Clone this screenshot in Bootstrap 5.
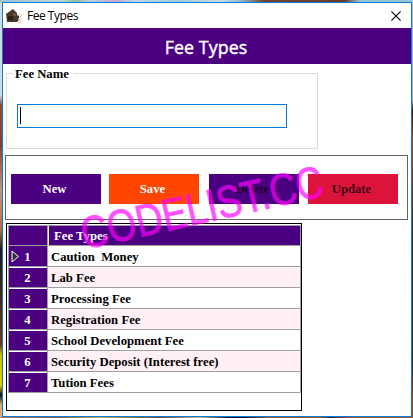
<!DOCTYPE html>
<html lang="en">
<head>
<meta charset="utf-8">
<meta name="viewport" content="width=device-width, initial-scale=1">
<title>Fee Types</title>
<link rel="stylesheet" href="https://cdn.jsdelivr.net/npm/bootstrap@5.3.0/dist/css/bootstrap.min.css">
<style>
html,body{height:100%;overflow:hidden}
.desktop{width:413px;height:418px;padding:2px 1px 1px 2px;
background:
linear-gradient(90deg,#9cc4d4,#b8d4dc 60px,#90c0a0 75px,#b8d0dc 90px,#c8a8d0 115px,#b8dce8 135px,#a0ccdc 180px,#c8dce8 220px,#90c0d0 240px,#704030 265px,#6a3c2c 345px,#90c8d8 360px,#90c8d8) 0 0/100% 2px no-repeat,
linear-gradient(90deg,#b08060,#8a5a40 60px,#c0b070 100px,#704028 160px,#c8c090 200px,#181020 228px,#100c20 245px,#a06030 270px,#a05830 320px,#302030 330px,#a05830 350px) 0 100%/100% 1px no-repeat,
linear-gradient(#d0dce0,#d0dcdc 95px,#805040 105px,#704838 145px,#c09880 190px,#a87050 230px,#201818 250px,#703820 345px,#d0c000 355px,#e0d000 385px,#101010 395px,#d0b080 405px) 0 0/2px 100% no-repeat,
linear-gradient(#90c8d8,#80b8c8 100px,#301810 110px,#905040 140px,#303030 240px,#203040 360px,#904820 400px) 100% 0/1px 100% no-repeat}
.win{width:410px;height:415px;border:1px solid #0f7bd4;font-family:"Liberation Serif",serif;font-weight:700;font-size:12.7px;color:#000}
.titlebar{height:25px;font:12px/25px "Open Sans","Noto Sans",sans-serif;padding:0 10px 0 3px}
.titlebar .cap{margin-left:4px;letter-spacing:-.48px}
.banner{height:36px;background:#4b0082;font:500 17.800px/38px "Open Sans","Noto Sans",sans-serif;letter-spacing:.1px;-webkit-text-stroke:.4px #fff;padding-right:2px}
.group{width:312px;height:76px;margin:9px 0 0 3px;border:1px solid #dcdcdc;padding-left:10px}
.group .lgd{height:14px;line-height:14px;margin:-7px 0 0 -4px;width:60px;padding-left:2px;background:#fff;white-space:nowrap}
.field{width:270px;height:24px;border:1px solid #0078d7;margin-top:23px;padding:2px}
.caret{width:1px;height:17px;background:#000}
.tools{width:403px;height:65px;margin:6px 0 0 2px;border:1px solid #646464;padding:18px 0 0 5px}
.tools .btn{width:90px;height:30px;font-size:12.7px;font-weight:700;line-height:30px;padding:0 3px 0 0;opacity:1}
.tools .indigo{background:#4b0082}
.tools .save{background:#ff4500;margin-left:8px}
.tools .del{margin-left:10px;color:#1c0030}
.tools .upd{background:#dc143c;margin-left:9px;color:#400610}
.gridbox{width:296px;height:188px;margin:3px 0 0 3px;border:1px solid #000;padding:1px 0 0 1px}
.rows{width:293px;border:1px solid #a0a0a0;border-bottom:0}
.line{height:21px;border-bottom:1px solid #a0a0a0;line-height:23px}
.line>div{height:20px}
.line.top{height:20px;line-height:20px}
.line.top>div{height:19px}
.num{width:38px;background:#4b0082;color:#fff;box-shadow:inset 0 1px #fff;padding-right:1px}
.top .num,.first .num{box-shadow:none}
.val{border-left:1px solid #a0a0a0;padding-left:3px;white-space:pre;letter-spacing:.02px}
.top .val{background:#4b0082;color:#fff;padding-left:6px;box-shadow:inset 1px 0 #fff}
.line.alt .val{background:#fff0f5}
.arrow{left:2px;top:4px}
.mark-layer{left:0;top:0;pointer-events:none}
</style>
</head>
<body>
<div class="desktop position-relative">
<main class="win bg-white">
<header class="titlebar d-flex align-items-center">
<svg width="17" height="16" viewBox="0 0 17 16"><path d="M0 6 7 1l4 4v2l2 1v4l-2 2H1z" fill="#4a3728"/><path d="M2 8h5v4H2z" fill="#2c2018"/><path d="M7 5h3v3H7z" fill="#6b5138"/><path d="M12 7q4-3 3 1t-3 3q4 0 3 3t-3 0" fill="none" stroke="#e5c8b0" stroke-width="1"/></svg>
<span class="cap">Fee Types</span>
<svg class="ms-auto" width="10" height="10" viewBox="0 0 10 10"><path d="M.4.4 9.6 9.6M9.6.4.4 9.6" stroke="#000" stroke-width="1.1"/></svg>
</header>
<div class="banner text-white text-center">Fee Types</div>
<section class="group"><div class="lgd">Fee Name</div><div class="field"><div class="caret"></div></div></section>
<section class="tools d-flex align-items-start">
<button class="btn rounded-0 border-0 text-white indigo">New</button>
<button class="btn rounded-0 border-0 text-white save">Save</button>
<button class="btn rounded-0 border-0 del indigo">Delete</button>
<button class="btn rounded-0 border-0 upd">Update</button>
</section>
<section class="gridbox"><div class="rows">
<div class="line top d-flex"><div class="num"></div><div class="val flex-fill">Fee Types</div></div>
<div class="line first d-flex"><div class="num text-center position-relative"><svg class="arrow position-absolute" width="9" height="13"><path d="M1 1v11l6.500-5.500z" fill="#333" stroke="#fff"/></svg>1</div><div class="val flex-fill">Caution  Money</div></div>
<div class="line alt d-flex"><div class="num text-center">2</div><div class="val flex-fill">Lab Fee</div></div>
<div class="line d-flex"><div class="num text-center">3</div><div class="val flex-fill">Processing Fee</div></div>
<div class="line alt d-flex"><div class="num text-center">4</div><div class="val flex-fill">Registration Fee</div></div>
<div class="line d-flex"><div class="num text-center">5</div><div class="val flex-fill">School Development Fee</div></div>
<div class="line alt d-flex"><div class="num text-center">6</div><div class="val flex-fill">Security Deposit (Interest free)</div></div>
<div class="line d-flex"><div class="num text-center">7</div><div class="val flex-fill">Tution Fees</div></div>
</div></section>
</main>
<svg class="mark-layer position-absolute" width="413" height="418"><text transform="translate(84.500 249.500) rotate(-12.600)" textLength="247" lengthAdjust="spacingAndGlyphs" font-family="Liberation Sans, sans-serif" font-size="45" fill="#f0f" stroke="#f0f" stroke-width=".8" opacity=".68">CODELIST.CC</text></svg>
</div>
<script src="https://cdn.jsdelivr.net/npm/bootstrap@5.3.0/dist/js/bootstrap.bundle.min.js"></script>
</body>
</html>
